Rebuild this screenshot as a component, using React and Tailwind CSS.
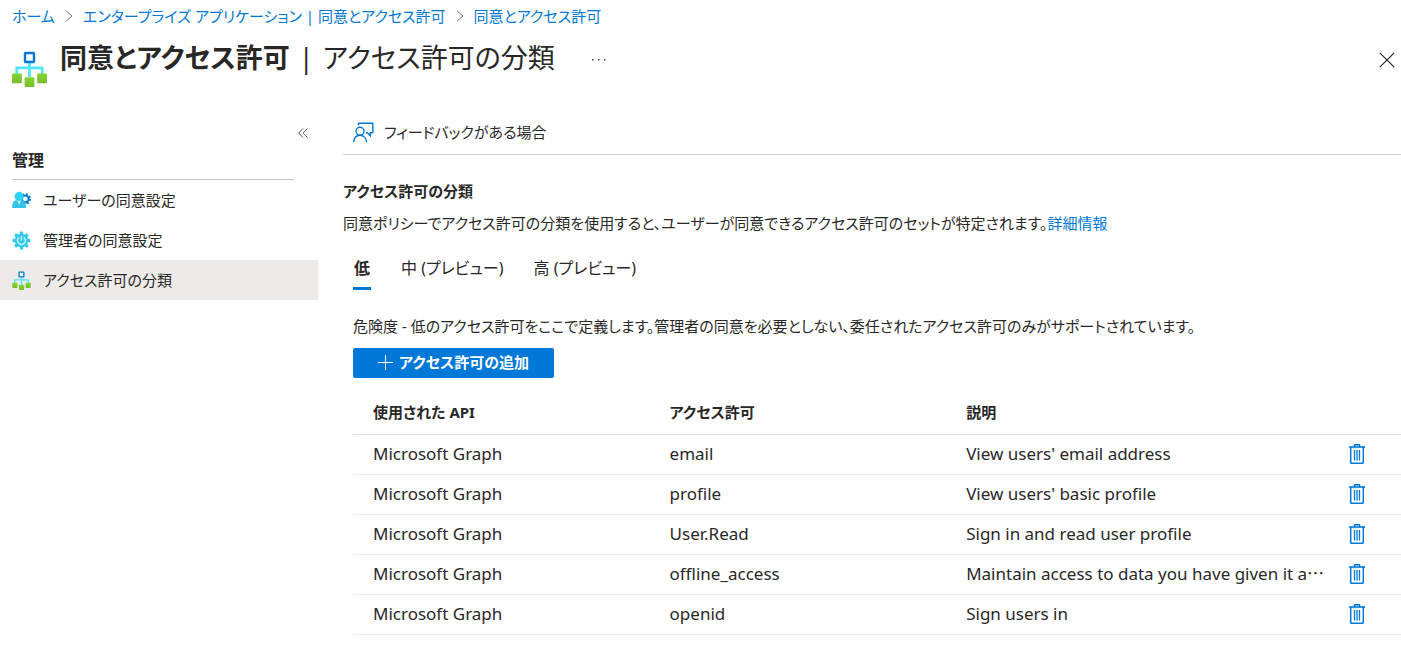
import { useState } from "react";

const permissions = [
  { api: "Microsoft Graph", name: "email", description: "View users' email address" },
  { api: "Microsoft Graph", name: "profile", description: "View users' basic profile" },
  { api: "Microsoft Graph", name: "User.Read", description: "Sign in and read user profile" },
  {
    api: "Microsoft Graph",
    name: "offline_access",
    description: "Maintain access to data you have given it access to",
  },
  { api: "Microsoft Graph", name: "openid", description: "Sign users in" },
];

function HierarchyIcon({ className }) {
  return (
    <svg className={className} viewBox="0 0 35 36" aria-hidden="true">
      <defs>
        <linearGradient id="leaf" x1="0" y1="0" x2="0" y2="1">
          <stop offset="0" stopColor="#86d633" />
          <stop offset="1" stopColor="#76bc2d" />
        </linearGradient>
      </defs>
      <path d="M17.5 12v14M4.8 23v-6.2h25.4V23" fill="none" stroke="#50e6ff" strokeWidth="2.8" strokeLinejoin="round" />
      <rect x="13" y="2" width="9" height="9" fill="#fff" stroke="#0078d4" strokeWidth="2.4" rx="0.4" />
      <rect x="0" y="22.4" width="9.8" height="9.8" rx="0.8" fill="url(#leaf)" />
      <rect x="12.6" y="26.2" width="9.8" height="9.8" rx="0.8" fill="url(#leaf)" />
      <rect x="25.2" y="22.4" width="9.8" height="9.8" rx="0.8" fill="url(#leaf)" />
    </svg>
  );
}

function UserSettingsIcon({ className }) {
  return (
    <svg className={className} viewBox="0 0 20 20" aria-hidden="true">
      <g fill="none" stroke="#0078d4">
        <circle cx="14" cy="8.4" r="3.6" strokeWidth="2.2" />
        <circle cx="14" cy="8.4" r="5.2" strokeWidth="1.8" strokeDasharray="2 2.08" />
      </g>
      <path
        d="M13.6 18H1.4C.6 18 0 17.3.1 16.5l.7-3.7C1.2 10.8 2.8 9.8 4.5 9.8h6c1.7 0 3.2 1 3.6 3l.8 3.7c.1.8-.5 1.5-1.3 1.5z"
        fill="#32c4e8"
      />
      <path d="M7.5 14.5 5.4 9.8h4.2z" fill="#d8f7ff" />
      <circle cx="7.5" cy="5.7" r="4.8" fill="#32d4f5" />
    </svg>
  );
}

function GearPowerIcon({ className }) {
  return (
    <svg className={className} viewBox="0 0 20 20" aria-hidden="true">
      <g fill="#32c8ec">
        <circle cx="10" cy="10" r="7" />
        <rect x="8.2" y="0.6" width="3.6" height="18.8" rx="1" />
        <rect x="8.2" y="0.6" width="3.6" height="18.8" rx="1" transform="rotate(45 10 10)" />
        <rect x="8.2" y="0.6" width="3.6" height="18.8" rx="1" transform="rotate(90 10 10)" />
        <rect x="8.2" y="0.6" width="3.6" height="18.8" rx="1" transform="rotate(135 10 10)" />
      </g>
      <path d="M7 7.4a4 4 0 1 0 6 0M10 5.5v4" fill="none" stroke="#c9f5ff" strokeWidth="1.5" strokeLinecap="round" />
    </svg>
  );
}

function FeedbackIcon({ className }) {
  return (
    <svg className={className} viewBox="0 0 21 21" fill="none" stroke="#0078d4" strokeWidth="1.4" aria-hidden="true">
      <path d="M5.5 3.5V1.2h14.3v9.6h-2.5v3l-3-3h-1.3" />
      <circle cx="7" cy="9.2" r="4" />
      <path d="M.7 20.2c.3-4.2 2.7-7 6.3-7s6.3 2.8 6.7 7" />
    </svg>
  );
}

function TrashIcon({ className }) {
  return (
    <svg className={className} viewBox="0 0 16 20" fill="none" stroke="#0078d4" aria-hidden="true">
      <path d="M0 3h16" strokeWidth="1.6" />
      <path d="M5.5 3V.8h5V3" strokeWidth="1.4" />
      <path d="M1.7 3v15.3q0 1 1 1h10.6q1 0 1-1V3" strokeWidth="1.5" />
      <path d="M5.5 6v10.5M8 6v10.5M10.5 6v10.5" strokeWidth="1.3" />
    </svg>
  );
}

function Chevron() {
  return (
    <svg className="mx-2.5 h-3 w-2" viewBox="0 0 8 12" fill="none" stroke="#7a7876" aria-hidden="true">
      <path d="M1 .8 7 6l-6 5.2" />
    </svg>
  );
}

const menu = [
  { label: "ユーザーの同意設定", Icon: UserSettingsIcon },
  { label: "管理者の同意設定", Icon: GearPowerIcon },
  { label: "アクセス許可の分類", Icon: HierarchyIcon },
];

const tabs = ["低", "中 (プレビュー)", "高 (プレビュー)"];

export default function App() {
  const [tab, setTab] = useState(0);

  return (
    <div className="bg-white font-['Noto_Sans','Noto_Sans_CJK_JP',sans-serif] text-[15px]/6 text-[#292827] [font-feature-settings:'palt']">
      <nav aria-label="階層" className="flex h-8 items-center px-3 text-[#0078d4]">
        <a href="#home">ホーム</a>
        <Chevron />
        <a href="#apps">エンタープライズ アプリケーション | 同意とアクセス許可</a>
        <Chevron />
        <a href="#consent">同意とアクセス許可</a>
      </nav>

      <header className="flex h-16 items-start pl-3 pr-1.5">
        <HierarchyIcon className="mt-[19px] h-9 w-[35px]" />
        <h1 className="ml-[13px] mt-1 text-[27px]/[44px] font-normal">
          <span className="font-bold">同意とアクセス許可</span> <span className="mx-0.5">|</span> アクセス許可の分類
        </h1>
        <button type="button" aria-label="その他" className="ml-9 mt-4 flex h-6 w-4 items-center">
          <svg className="h-1 w-4" viewBox="0 0 16 4" fill="#484644" aria-hidden="true">
            <path d="M1 1h1.5v1.5H1zM7 1h1.5v1.5H7zM13 1h1.5v1.5H13z" />
          </svg>
        </button>
        <button type="button" aria-label="閉じる" className="ml-auto mt-5 flex size-4 items-center justify-center">
          <svg className="size-4" viewBox="0 0 16 16" fill="none" stroke="#292827" strokeWidth="1.2" aria-hidden="true">
            <path d="m.8.8 14.4 14.4M15.2.8.8 15.2" />
          </svg>
        </button>
      </header>

      <div className="flex pt-4">
        <aside className="w-[318px] shrink-0">
          <div className="flex h-9 items-end justify-end pb-[7px] pr-2.5">
            <button type="button" aria-label="折りたたむ" className="flex h-4 items-center">
              <svg className="size-2.5" viewBox="0 0 10 10" fill="none" stroke="#605e5c" aria-hidden="true">
                <path d="M5 .5.7 5 5 9.5M9.5.5 5.2 5l4.3 4.5" />
              </svg>
            </button>
          </div>
          <h2 className="ml-3 mr-6 h-8 border-b border-[#c8c6c4] text-base font-bold">管理</h2>
          <ul>
            {menu.map(({ label, Icon }, i) => (
              <li key={label}>
                <a
                  href={`#menu-${i}`}
                  aria-current={i === 2 ? "page" : undefined}
                  className={`flex h-10 items-center gap-3 pl-3 ${i === 2 ? "bg-[#edebe9]" : ""}`}
                >
                  <Icon className="size-[19px]" />
                  {label}
                </a>
              </li>
            ))}
          </ul>
        </aside>

        <main className="min-w-0 flex-1 pl-[25px]">
          <div className="flex h-[43px] items-center border-b border-[#d2d0ce] pb-0.5 pl-2.5">
            <button type="button" className="flex items-center gap-2.5">
              <FeedbackIcon className="size-[21px]" />
              フィードバックがある場合
            </button>
          </div>

          <h2 className="mt-6 font-bold">アクセス許可の分類</h2>
          <p className="mt-2">
            同意ポリシーでアクセス許可の分類を使用すると、ユーザーが同意できるアクセス許可のセットが特定されます。
            <a href="#details" className="text-[#0078d4]">
              詳細情報
            </a>
          </p>

          <div className="pl-2.5">
            <div role="tablist" className="mt-5 flex gap-[30px] text-base">
              {tabs.map((label, i) => (
                <button
                  key={label}
                  type="button"
                  role="tab"
                  aria-selected={i === tab}
                  onClick={() => setTab(i)}
                  className={`h-[35px] min-w-[18px] border-b-3 pb-1.5 ${i === tab ? "border-[#0078d4] font-bold" : "border-transparent"}`}
                >
                  {label}
                </button>
              ))}
            </div>

            <p className="mt-6">
              危険度 - 低のアクセス許可をここで定義します。管理者の同意を必要としない、委任されたアクセス許可のみがサポートされています。
            </p>
            <button
              type="button"
              className="mt-2.5 flex h-[30px] w-[201px] items-center justify-center gap-1.5 rounded-xs bg-[#0078d7] pb-0.5 font-bold text-white"
            >
              <svg className="size-[15px]" viewBox="0 0 15 15" stroke="currentColor" aria-hidden="true">
                <path d="M7.5 0v15M0 7.5h15" />
              </svg>
              アクセス許可の追加
            </button>

            <table className="mt-3 w-full table-fixed border-collapse text-left">
              <thead>
                <tr className="h-11 border-b border-[#e1dfdd]">
                  <th className="w-[28.3%] pl-5 font-bold">使用された API</th>
                  <th className="w-[28.3%] pl-5 font-bold">アクセス許可</th>
                  <th className="pl-5 font-bold">説明</th>
                  <th className="w-18" aria-label="削除" />
                </tr>
              </thead>
              <tbody className="text-[17px]">
                {permissions.map(({ api, name, description }) => (
                  <tr key={name} className="h-10 border-b border-[#edebe9]">
                    <td className="pl-5">{api}</td>
                    <td className="pl-5">{name}</td>
                    <td className="truncate pb-0.5 pl-5 font-['Noto_Sans_CJK_JP',sans-serif]">
                      <span className="font-['Noto_Sans',sans-serif]">{description}</span>
                    </td>
                    <td className="pl-5">
                      <button type="button" aria-label={`${name} を削除`} className="block">
                        <TrashIcon className="h-5 w-4" />
                      </button>
                    </td>
                  </tr>
                ))}
              </tbody>
            </table>
          </div>
        </main>
      </div>
    </div>
  );
}
